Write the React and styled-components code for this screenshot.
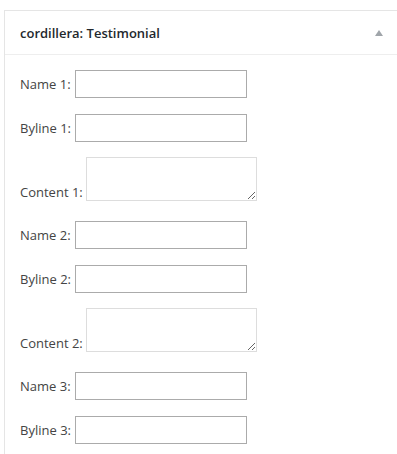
import React from "react";
import styled, { createGlobalStyle } from "styled-components";

const Global = createGlobalStyle`
  html, body { margin: 0; padding: 0; background: #fff; overflow: hidden; }
  body { font-family: "Open Sans", "Noto Sans", sans-serif; color: #444; }
`;

const Panel = styled.div`
  margin: 10px 0 0 4px;
  border: 1px solid #e5e5e5;
  border-right: none;
  background: #fff;
`;

const Header = styled.div`
  height: 43px;
  display: flex;
  align-items: center;
  justify-content: space-between;
  padding: 0 14px 0 15px;
  border-bottom: 1px solid #eeeeee;
`;

const Title = styled.h3`
  margin: 0;
  font-size: 13px;
  font-weight: 600;
  color: #23282d;
`;

const Toggle = styled.span`
  width: 0;
  height: 0;
  border-left: 4px solid transparent;
  border-right: 4px solid transparent;
  border-bottom: 6px solid #a0a5aa;
`;

const Body = styled.div`
  padding: 15px 15px 20px;
  display: flex;
  flex-direction: column;
  gap: 16px;
`;

const Row = styled.div`
  display: flex;
  align-items: ${(p) => (p.$area ? "flex-end" : "center")};
  gap: 4px;
  margin-top: ${(p) => (p.$area ? "-1px" : "0")};
  padding-bottom: ${(p) => (p.$area ? "4px" : "0")};
`;

const Label = styled.label`
  font-size: 13px;
  line-height: 18px;
  color: #444;
  white-space: nowrap;
`;

const Input = styled.input`
  box-sizing: border-box;
  width: 172px;
  height: 28px;
  margin: 0;
  border: 1px solid #ababab;
  background: #fff;
  padding: 3px 5px;
  font-family: inherit;
`;

const Area = styled.textarea`
  box-sizing: border-box;
  width: 171px;
  height: 44px;
  margin: 0 0 0 -1px;
  border: 1px solid #dddddd;
  background: #fff;
  font-family: inherit;
  display: block;
`;

const fields = [1, 2, 3];

export default function App() {
  return (
    <>
      <Global />
      <Panel>
        <Header>
          <Title>cordillera: Testimonial</Title>
          <Toggle />
        </Header>
        <Body>
          {fields.map((n) => (
            <React.Fragment key={n}>
              <Row>
                <Label>Name {n}:</Label>
                <Input type="text" />
              </Row>
              <Row>
                <Label>Byline {n}:</Label>
                <Input type="text" />
              </Row>
              {n < 3 && (
                <Row $area>
                  <Label>Content {n}:</Label>
                  <Area />
                </Row>
              )}
            </React.Fragment>
          ))}
        </Body>
      </Panel>
    </>
  );
}
